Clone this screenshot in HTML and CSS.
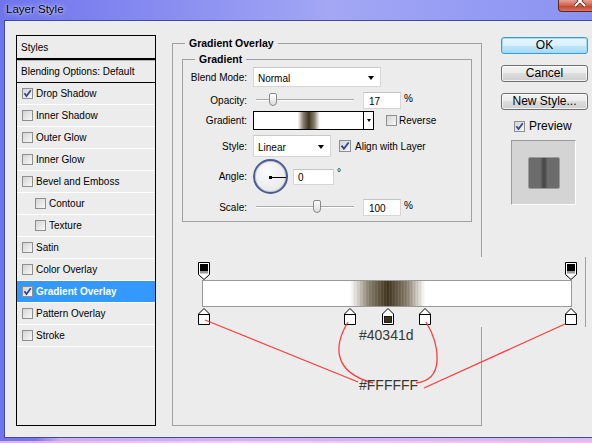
FILE: index.html
```html
<!DOCTYPE html>
<html lang="en">
<head>
  <meta charset="UTF-8">
  <title>Layer Style</title>
  <link rel="stylesheet" href="styles.css">
</head>
<body>
  <div class="window">
    <div class="titlebar">
      <span class="title">Layer Style</span>
      <span class="close">
        <svg width="42" height="12" viewBox="0 0 42 12">
          <path class="x-shade" d="M16 -4 L26 6 M26 -4 L16 6"/>
          <path class="x" d="M16 -4 L26 6 M26 -4 L16 6"/>
        </svg>
      </span>
    </div>

    <div class="client">
      <ul class="styles">
        <li class="head">Styles</li>
        <li class="blending">Blending Options: Default</li>
        <li><span class="cb"><svg viewBox="0 0 9 9"><path d="M1.4 4.2 3.5 7 7.8 1.3"/></svg></span>Drop Shadow</li>
        <li><span class="cb"></span>Inner Shadow</li>
        <li><span class="cb"></span>Outer Glow</li>
        <li><span class="cb"></span>Inner Glow</li>
        <li><span class="cb"></span>Bevel and Emboss</li>
        <li class="sub"><span class="cb"></span>Contour</li>
        <li class="sub"><span class="cb"></span>Texture</li>
        <li><span class="cb"></span>Satin</li>
        <li><span class="cb"></span>Color Overlay</li>
        <li class="active"><span class="cb"><svg viewBox="0 0 9 9"><path d="M1.4 4.2 3.5 7 7.8 1.3"/></svg></span>Gradient Overlay</li>
        <li><span class="cb"></span>Pattern Overlay</li>
        <li><span class="cb"></span>Stroke</li>
      </ul>

      <fieldset class="group outer">
        <legend>Gradient Overlay</legend>
        <fieldset class="group inner">
          <legend>Gradient</legend>

          <div class="field">
            <label>Blend Mode:</label>
            <div class="select blend">Normal<i class="arrow"></i></div>
          </div>

          <div class="field f-opacity">
            <label>Opacity:</label>
            <div class="slider"><span class="thumb" style="left:17%"></span></div>
            <div class="num">17</div>
            <span class="unit">%</span>
          </div>

          <div class="field">
            <label>Gradient:</label>
            <div class="picker">
              <div class="ramp"></div>
              <div class="drop"><i class="arrow"></i></div>
            </div>
            <span class="check reverse"><span class="cb"></span>Reverse</span>
          </div>

          <div class="field f-style">
            <label>Style:</label>
            <div class="select kind">Linear<i class="arrow"></i></div>
            <span class="check align"><span class="cb"><svg viewBox="0 0 9 9"><path d="M1.4 4.2 3.5 7 7.8 1.3"/></svg></span>Align with Layer</span>
          </div>

          <div class="field f-angle">
            <label>Angle:</label>
            <div class="dial"></div>
            <div class="num angle">0</div>
            <span class="deg">°</span>
          </div>

          <div class="field f-scale">
            <label>Scale:</label>
            <div class="slider"><span class="thumb" style="left:62%"></span></div>
            <div class="num">100</div>
            <span class="unit">%</span>
          </div>
        </fieldset>
      </fieldset>

      <div class="side">
        <button class="btn ok">OK</button>
        <button class="btn">Cancel</button>
        <button class="btn">New Style...</button>
        <div class="preview-check"><span class="cb"><svg viewBox="0 0 9 9"><path d="M1.4 4.2 3.5 7 7.8 1.3"/></svg></span>Preview</div>
        <div class="preview"><div class="sample"></div></div>
      </div>
    </div>
  </div>

  <!-- gradient editor strip with its stops -->
  <div class="editor">
    <div class="stops top">
      <span class="stop" style="left:0%">
        <svg width="12" height="18" viewBox="0 0 12 18"><path d="M0.5 0.5H11.5V12.5L6 17.5 0.5 12.5Z" fill="#fff" stroke="#000"/><rect x="2" y="2" width="8" height="7" fill="#000"/><rect x="2" y="9" width="8" height="2.5" fill="#999"/></svg>
      </span>
      <span class="stop" style="left:100%">
        <svg width="12" height="18" viewBox="0 0 12 18"><path d="M0.5 0.5H11.5V12.5L6 17.5 0.5 12.5Z" fill="#fff" stroke="#000"/><rect x="2" y="2" width="8" height="7" fill="#000"/><rect x="2" y="9" width="8" height="2.5" fill="#999"/></svg>
      </span>
    </div>
    <div class="bar"></div>
    <div class="stops bottom">
      <span class="stop" style="left:0%">
        <svg width="12" height="17" viewBox="0 0 12 17"><path d="M6 0.5 11.5 6V16.5H0.5V6Z" fill="#fff" stroke="#000"/><path d="M0.5 6.5H11.5" stroke="#000"/></svg>
      </span>
      <span class="stop" style="left:39.7%">
        <svg width="12" height="17" viewBox="0 0 12 17"><path d="M6 0.5 11.5 6V16.5H0.5V6Z" fill="#fff" stroke="#000"/><path d="M0.5 6.5H11.5" stroke="#000"/></svg>
      </span>
      <span class="stop" style="left:50.1%">
        <svg width="12" height="17" viewBox="0 0 12 17"><path d="M6 0.5 11.5 6V16.5H0.5V6Z" fill="#fff" stroke="#000"/><rect x="2.5" y="8.5" width="7" height="6" fill="#40341d" stroke="#000" stroke-width=".8"/></svg>
      </span>
      <span class="stop" style="left:60.3%">
        <svg width="12" height="17" viewBox="0 0 12 17"><path d="M6 0.5 11.5 6V16.5H0.5V6Z" fill="#fff" stroke="#000"/><path d="M0.5 6.5H11.5" stroke="#000"/></svg>
      </span>
      <span class="stop" style="left:100%">
        <svg width="12" height="17" viewBox="0 0 12 17"><path d="M6 0.5 11.5 6V16.5H0.5V6Z" fill="#fff" stroke="#000"/><path d="M0.5 6.5H11.5" stroke="#000"/></svg>
      </span>
    </div>
  </div>

  <!-- colour callouts -->
  <svg class="notes" width="592" height="443" viewBox="0 0 592 443">
    <path d="M205 320 L358 382"/>
    <path d="M565 324 L424 388"/>
    <path d="M348 322 C334 345 332 372 373 383"/>
    <path d="M426 322 C440 345 445 380 416 383"/>
    <text x="359" y="340">#40341d</text>
    <text x="359" y="390">#FFFFFF</text>
  </svg>
</body>
</html>
```

FILE: styles.css
```css
body { margin: 0; width: 592px; height: 443px; overflow: hidden; position: relative; background: linear-gradient(to right, #e6b0e6, #f6cdf4 40%, #eebde9); font-family: "Liberation Sans", Arial, sans-serif; font-size: 10px; color: #000; }

/* window frame + title */
.window { width: 600px; height: 441px; display: flex; flex-direction: column;
  background: linear-gradient(to right, rgba(0,0,0,0) 0 36px, #c7b0ee 60px, #dcbdf0) left bottom / 100% 3px no-repeat,
              linear-gradient(to right, #6f74ee 0, #868af0 25%, #a3a7f4 55%, #949bf3 80%, #8a92f2 100%); }
.titlebar { height: 20px; flex: none; display: flex; align-items: flex-start; }
.title { padding: 3px 0 0 6px; font-size: 11.5px; line-height: 13px; text-shadow: 0 0 5px rgba(255,255,255,.8), 0 0 2px rgba(255,255,255,.6); }
.close { margin-left: auto; width: 42px; height: 12px; box-sizing: border-box; border: 1px solid #5b2822; border-top: 0; border-radius: 0 0 4px 4px; background: linear-gradient(#e3a293, #cf5a46 55%, #c54431 56%, #d87562); }
.close svg { display: block; fill: none; }
.close .x-shade { stroke: #5d2a24; stroke-width: 3.6; }
.close .x { stroke: #fff; stroke-width: 2; }

.client { flex: 1; margin: 0 0 3px 4px; border: 1px solid #3e4b9f; border-right: 0; background: #ececec; display: flex; align-items: flex-start; padding-top: 14px; }

/* checkbox */
.cb { width: 11px; height: 11px; box-sizing: border-box; flex: none; display: inline-flex; border: 1px solid #8e8f8f; background: linear-gradient(135deg, #d4d4d4, #f8f8f8); margin-right: 3px; }
.cb svg { width: 9px; height: 9px; fill: none; stroke: #34448c; stroke-width: 1.7; }

/* styles list on the left */
.styles { width: 140px; height: 391px; box-sizing: border-box; margin: 0 0 0 11px; padding: 0; list-style: none; border: 1px solid #000; }
.styles li { height: 21px; border-bottom: 1px solid #fff; display: flex; align-items: center; padding-left: 5px; }
.styles li.head { height: 22px; padding-left: 4px; border-bottom: 2px solid #000; }
.styles li.blending { height: 21px; padding-left: 4px; border-top: 1px solid #b4b4b4; border-bottom: 1px solid #000; }
.styles li.sub { padding-left: 18px; }
.styles li.active { background: #3399ff; color: #fff; font-weight: bold; }

/* group boxes */
.group { margin: 0; padding: 0; border: 1px solid #a0a0a0; box-sizing: border-box; }
.group legend { margin-left: 12px; padding: 0 4px; font-weight: bold; font-size: 10.5px; line-height: 14px; }
.outer { width: 310px; height: 390px; margin: 1px 0 0 16px; }
.inner { margin: 2px 9px 0; padding: 1px 0 6px; }

.field { height: 20px; display: flex; align-items: center; }
.field label { width: 64px; flex: none; text-align: right; margin-right: 6px; }
.f-opacity { margin-top: 3px; }
.f-style { height: 22px; margin-top: 5px; }
.f-angle { height: 35px; margin-top: 2px; }
.f-scale { height: 16px; margin-top: 5px; }

.select { height: 20px; box-sizing: border-box; display: flex; align-items: center; justify-content: space-between; padding: 2px 6px 0 4px; background: #fff; border: 1px solid #d6d6d6; border-top-color: #c8c8c8; }
.select.blend { width: 128px; }
.select.kind { width: 78px; height: 22px; }
.arrow { width: 0; height: 0; border-top: 4px solid #000; border-left: 3.5px solid transparent; border-right: 3.5px solid transparent; }

.slider { position: relative; width: 98px; height: 15px; margin: 0 3px; }
.slider::before { content: ""; position: absolute; left: 0; right: 0; top: 6px; height: 1px; background: #a9a9a9; border-bottom: 1px solid #fff; }
.thumb { position: absolute; top: 0; width: 8px; height: 13px; margin-left: -4px; box-sizing: border-box; border: 1px solid #8a8a8a; border-radius: 2px 2px 4px 4px; background: linear-gradient(#ffffff, #dcdcdc); }

.num { width: 38px; height: 17px; box-sizing: border-box; margin-left: 6px; padding: 3px 0 0 5px; background: #fff; border: 1px solid #d6d6d6; border-top-color: #c4c4c4; }
.unit { margin: 0 0 4px 3px; }

.picker { width: 121px; height: 19px; box-sizing: border-box; display: flex; border: 1px solid #000; }
.ramp { flex: 1; background: linear-gradient(to right, #fff 0, #fff 39.9%, #d8d4cc 42%, #8a8170 45%, #40341d 50.2%, #8a8170 55.5%, #d8d4cc 58.5%, #fff 60.4%, #fff 100%); }
.drop { width: 9px; border-left: 1px solid #000; background: #fff; display: flex; align-items: center; justify-content: center; }
.drop .arrow { border-top-width: 3px; border-left-width: 2.5px; border-right-width: 2.5px; }

.check { display: flex; align-items: center; }
.reverse { margin-left: 12px; }
.reverse .cb { margin-right: 2px; }
.align { margin-left: 8px; }
.align .cb { width: 12px; height: 12px; margin-right: 4px; }
.align .cb svg { width: 10px; height: 10px; }

.dial { position: relative; width: 35px; height: 35px; box-sizing: border-box; border-radius: 50%; border: 2px solid #4d5a8f; background: radial-gradient(circle at 40% 35%, #fbfbfb, #e4e4e4); box-shadow: inset 0 0 0 1px #c8ccd8; }
.dial::before { content: ""; position: absolute; left: 50%; top: 50%; width: 50%; height: 1px; margin-top: 0; background: #000; }
.dial::after { content: ""; position: absolute; left: 50%; top: 50%; width: 3px; height: 3px; margin: -1px 0 0 -2px; background: #000; }
.num.angle { width: 41px; margin-left: 5px; padding-left: 4px; height: 16px; padding-top: 2px; }
.deg { align-self: flex-start; margin: 8px 0 0 3px; }

/* buttons and preview */
.side { width: 87px; margin: 2px 0 0 19px; display: flex; flex-direction: column; }
.btn { display: block; width: 87px; height: 17px; padding: 0; margin: 0; border: 1px solid #707070; border-radius: 3px; background: linear-gradient(#f3f3f3 0, #ebebeb 50%, #dddddd 50%, #cfcfcf 100%); box-shadow: inset 0 0 0 1px rgba(255,255,255,.7); font: 12px/15px "Liberation Sans", Arial, sans-serif; color: #000; }
.btn + .btn { margin-top: 11px; }
.btn.ok { border-color: #3c9ad6; background: linear-gradient(#eaf6fd 0, #d9f0fc 50%, #bee6fd 50%, #a7d9f5 100%); box-shadow: inset 0 0 0 1px #9fdcfa; }
.preview-check { display: flex; align-items: center; height: 12px; margin-top: 10px; padding-left: 13px; font-size: 12px; }
.preview-check .cb { margin-right: 4px; }
.preview { width: 65px; height: 65px; box-sizing: border-box; margin: 8px 0 0 10px; display: flex; align-items: center; justify-content: center; background: #d4d4d4; border: 1px solid; border-color: #9b9b9b #fff #fff #9b9b9b; }
.sample { width: 32px; height: 32px; box-sizing: border-box; border: 1px solid #9a9a9a; border-radius: 2px; background: linear-gradient(to right, #6c6c6c 0, #6c6c6c 38%, #5a5a5a 42%, #444 50%, #5a5a5a 58%, #6c6c6c 62%, #6c6c6c 100%); }

/* gradient editor strip */
.editor { position: absolute; left: 190px; top: 257px; width: 395px; height: 70px; background: #ececec; border-right: 1px solid #a0a0a0; }
.stops { position: relative; margin-left: 14px; width: 367px; }
.stops.top { height: 23px; }
.stops.bottom { height: 20px; }
.stop { position: absolute; margin-left: -6px; width: 12px; }
.stop svg { display: block; }
.stops.top .stop { top: 5px; }
.stops.bottom .stop { top: 1px; }
.bar { margin-left: 12px; width: 370px; height: 27px; box-sizing: border-box; border: 1px solid #999;
  background: repeating-linear-gradient(to right, rgba(255,255,255,.07) 0 1px, rgba(0,0,0,.04) 1px 2px, rgba(0,0,0,0) 2px 3px) 150px 0 / 70px 100% no-repeat,
              linear-gradient(to right, #fff 0, #fff 39.9%, #d8d4cc 42%, #8a8170 45%, #40341d 50.2%, #8a8170 55.5%, #d8d4cc 58.5%, #fff 60.4%, #fff 100%); }

.notes { position: absolute; left: 0; top: 0; pointer-events: none; }
.notes path { fill: none; stroke: #ff3c3c; stroke-width: 1.3; }
.notes text { font-family: "Liberation Sans", Arial, sans-serif; font-size: 14px; fill: #3a3832; }
```
